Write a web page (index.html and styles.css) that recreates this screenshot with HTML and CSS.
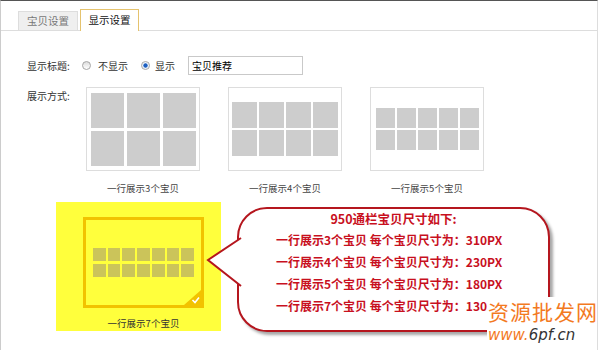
FILE: index.html
```html
<!DOCTYPE html>
<html lang="zh-CN">
  <head>
    <meta charset="UTF-8" />
    <title>显示设置</title>
    <link rel="stylesheet" href="styles.css">
  </head>
  <body>
    <div class="panel">
      <!-- 选项卡 -->
      <div class="tabs">
        <span class="tab">宝贝设置</span>
        <span class="tab active">显示设置</span>
      </div>

      <div class="form">
        <!-- 显示标题 -->
        <div class="title-row">
          <span class="label">显示标题:</span>
          <span class="radio"></span>
          <span class="radio-text">不显示</span>
          <span class="radio on"></span>
          <span class="radio-text">显示</span>
          <span class="input">宝贝推荐</span>
        </div>

        <!-- 展示方式 -->
        <div class="layout-row">
          <span class="label">展示方式:</span>
          <ul class="thumbs">
            <li class="item">
              <div class="thumb"><div class="grid cols-3"><i></i><i></i><i></i><i></i><i></i><i></i></div></div>
              <p class="name">一行展示3个宝贝</p>
            </li>
            <li class="item">
              <div class="thumb"><div class="grid cols-4"><i></i><i></i><i></i><i></i><i></i><i></i><i></i><i></i></div></div>
              <p class="name">一行展示4个宝贝</p>
            </li>
            <li class="item">
              <div class="thumb"><div class="grid cols-5"><i></i><i></i><i></i><i></i><i></i><i></i><i></i><i></i><i></i><i></i></div></div>
              <p class="name">一行展示5个宝贝</p>
            </li>
          </ul>
        </div>

        <!-- 选中项 + 说明 -->
        <div class="pick-row">
          <div class="picked">
            <div class="thumb-on">
              <div class="grid cols-7"><i></i><i></i><i></i><i></i><i></i><i></i><i></i><i></i><i></i><i></i><i></i><i></i><i></i><i></i></div>
              <svg class="check" width="17" height="15" viewBox="0 0 17 15">
                <polygon points="17,0 17,15 0,15" fill="#f2c200" />
                <path d="M8.5 10 L11 12.5 L15 7.5" fill="none" stroke="#fff" stroke-width="1.6" />
              </svg>
            </div>
            <p class="name">一行展示7个宝贝</p>
          </div>

          <div class="callout">
            <svg class="pointer" width="40" height="60" viewBox="0 0 40 60">
              <polygon points="38,4 2,28 38,56" fill="#fff" />
              <polyline points="35,6 2,28 35,54" fill="none" stroke="#b5161e" stroke-width="2" />
            </svg>
            <p class="head">950通栏宝贝尺寸如下:</p>
            <p class="line">一行展示3个宝贝 每个宝贝尺寸为：310PX</p>
            <p class="line">一行展示4个宝贝 每个宝贝尺寸为：230PX</p>
            <p class="line">一行展示5个宝贝 每个宝贝尺寸为：180PX</p>
            <p class="line">一行展示7个宝贝 每个宝贝尺寸为：130PX</p>
          </div>
        </div>
      </div>

      <!-- 水印 -->
      <div class="watermark">
        <p class="wm-name">资源批发网</p>
        <p class="wm-url"><span>www.</span>6pf.cn</p>
      </div>
    </div>
  </body>
</html>
```

FILE: styles.css
```css
* {
  padding: 0;
  margin: 0;
  box-sizing: border-box;
}

body {
  font-family: "Noto Sans CJK SC", "Liberation Sans", sans-serif;
  color: #333;
  background-color: #fff;
}

.panel {
  position: relative;

  width: 598px;
  height: 350px;
  border-top: 1px solid #555;
  border-left: 1px solid #ccc;
  border-right: 1px solid #ddd;
  overflow: hidden;
}

/* 选项卡 */
.tabs {
  display: flex;
  align-items: flex-end;
  gap: 2px;
  height: 30px;
  padding-left: 17px;
  border-bottom: 1px solid #ddd;
}

.tabs .tab {
  width: 60px;
  height: 19px;
  line-height: 17px;

  text-align: center;
  font-size: 10.5px;
  color: #777;

  border: 1px solid #ddd;
  border-bottom: none;
  background-color: #efefef;
}

.tabs .tab.active {
  width: 59px;
  height: 22px;
  line-height: 20px;
  margin-bottom: -1px;

  color: #111;

  border: 1px solid #e5c36e;
  border-bottom: none;
  background-color: #fff;
}

/* 表单 */
.form {
  padding: 25px 0 0 26px;
}

.label {
  width: 55px;
  font-size: 10px;
  line-height: 12px;
  color: #333;
}

.title-row {
  display: flex;
  align-items: center;
  height: 19px;
}

.title-row .radio {
  width: 9px;
  height: 9px;
  margin-right: 7px;
  border: 1px solid #a5a5a5;
  border-radius: 50%;

  background: linear-gradient(#dcdcdc, #fff);
}

.title-row .radio.on {
  background: radial-gradient(circle, #1d5fc0 0 1.8px, #cfe0f5 2.4px, #fff 3.5px);
}

.title-row .radio-text {
  margin-right: 13px;
  font-size: 10px;
  color: #333;
}

.title-row .radio.on {
  margin-right: 5px;
}

.title-row .radio-text:nth-of-type(2) {
  margin-right: 10px;
}

.title-row .input {
  width: 115px;
  height: 19px;
  padding-left: 3px;
  line-height: 17px;

  font-size: 10px;
  color: #000;

  border: 1px solid #c9c9c9;
}

/* 展示方式 */
.layout-row {
  display: flex;
  margin-top: 12px;
}

.layout-row .label {
  width: 59px;
  padding-top: 3px;
}

.thumbs {
  display: flex;
  gap: 28px;
  list-style: none;
}

.thumbs .item {
  width: 114px;
}

.thumb {
  display: flex;
  align-items: center;
  justify-content: center;
  height: 84px;

  border: 1px solid #ddd;
}

.grid {
  display: grid;
}

.grid i {
  background-color: #cdcdcd;
}

.grid.cols-3 {
  grid-template-columns: repeat(3, 33px);
  grid-auto-rows: 35px;
  gap: 3px;
}

.grid.cols-4 {
  grid-template-columns: repeat(4, 25px);
  grid-auto-rows: 26px;
  gap: 2px;
}

.grid.cols-5 {
  grid-template-columns: repeat(5, 19px);
  grid-auto-rows: 20px;
  gap: 2px;
}

.name {
  margin-top: 11px;
  line-height: 12px;

  text-align: center;
  font-size: 9.5px;
  color: #444;
}

/* 选中项 */
.pick-row {
  display: flex;
  align-items: flex-start;
  margin-top: 8px;
}

.picked {
  width: 165px;
  height: 129px;
  margin-left: 29px;
  padding: 15px 0 0 27px;

  background-color: #ffff3c;
}

.picked .thumb-on {
  position: relative;

  display: flex;
  align-items: center;
  justify-content: center;
  width: 121px;
  height: 91px;

  border: 3px solid #f2c200;
}

.grid.cols-7 {
  grid-template-columns: repeat(7, 12.7px);
  grid-auto-rows: 13px;
  gap: 3px 2px;
}

.grid.cols-7 i {
  background-color: #cbc45a;
}

.picked .check {
  position: absolute;
  right: 0;
  bottom: 0;
}

.picked .name {
  width: 121px;
  margin-top: 9px;
  color: #333;
}

/* 说明气泡 */
.callout {
  position: relative;

  width: 313px;
  height: 125px;
  margin: 5px 0 0 16px;
  padding-left: 37px;

  border: 2px solid #b5161e;
  border-radius: 30px;
  box-shadow: 3px 3px 3px rgba(0, 0, 0, 0.35);
  background-color: #fff;
}

.callout .pointer {
  position: absolute;
  top: 23px;
  left: -33px;
}

.callout .head {
  margin-left: -37px;
  line-height: 20px;

  text-align: center;
  font-size: 12.5px;
  font-weight: bold;
  color: #c8101e;
}

.callout .line {
  line-height: 22px;

  font-size: 12px;
  font-weight: bold;
  color: #c8101e;
}

/* 水印 */
.watermark {
  position: absolute;
  top: 296px;
  left: 486px;
  right: -1px;
  bottom: 0;

  padding-left: 1px;
  background-color: #fff;
}

.watermark .wm-name {
  line-height: 28px;

  font-size: 21px;
  letter-spacing: 1px;
  color: #f37a1f;
}

.watermark .wm-url {
  margin-top: 2px;
  line-height: 16px;

  font-family: "DejaVu Sans", sans-serif;
  font-style: italic;
  font-size: 15px;
  color: #333;
}

.watermark .wm-url span {
  color: #f37a1f;
}
```
